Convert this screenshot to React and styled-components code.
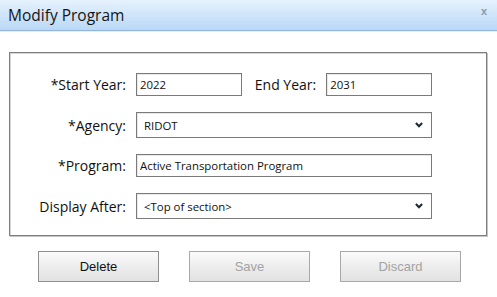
import React from 'react'
import styled, { createGlobalStyle } from 'styled-components'

const Global = createGlobalStyle`
  html, body { margin: 0; padding: 0; background: #fff; }
  body { font-family: "Open Sans", "Noto Sans", sans-serif; color: #111; }
`

const Dialog = styled.div`
  width: 497px;
  height: 297px;
  display: flex;
  flex-direction: column;
  background: #fff;
`

const TitleBar = styled.div`
  height: 31px;
  box-sizing: border-box;
  display: flex;
  align-items: center;
  justify-content: space-between;
  padding: 0 10px 1px 8px;
  background: linear-gradient(to bottom, #e6f2fd 0%, #cfe5fa 50%, #b9d8f6 100%);
  border-bottom: 1px solid #92b6dc;
  box-shadow: 0 1px 0 #e4eef8;
`

const Title = styled.span`
  font-size: 15.5px;
  color: #151515;
`

const Close = styled.span`
  font-family: "Liberation Sans", Arial, sans-serif;
  font-weight: bold;
  font-size: 11px;
  color: #8a9aab;
  align-self: flex-start;
  margin-top: 5px;
`

const Body = styled.div`
  padding: 21px 10px 0 9px;
`

const Panel = styled.div`
  height: 184px;
  box-sizing: border-box;
  border: 1px solid #7e7e7e;
  box-shadow: 1px 1px 0 #c4c4c4, inset 1px 1px 0 #d6d6d6;
  padding: 20px 0 0 0;
  display: grid;
  grid-template-columns: 116px 296px;
  column-gap: 10px;
  row-gap: 16px;
  align-content: start;
`

const Label = styled.label`
  font-size: 14px;
  text-align: right;
  align-self: center;
  color: #111;
  white-space: nowrap;
`

const YearRow = styled.div`
  display: flex;
  align-items: center;
`

const InlineLabel = styled(Label)`
  margin: 0 10px 0 13px;
`

const Field = styled.div`
  box-sizing: border-box;
  height: ${p => p.$tall ? '26px' : '23px'};
  width: ${p => p.$w || '296px'};
  border: 1px solid #7a7a7a;
  box-shadow: inset 1px 1px 0 #e8e8e8;
  display: flex;
  align-items: center;
  justify-content: space-between;
  padding: 0 8px 0 ${p => p.$pad || '3px'};
  font-size: 11.4px;
  color: #111;
  background: #fff;
`

const Chevron = () => (
  <svg width="8" height="6" viewBox="0 0 8 6">
    <path d="M0.9 1 L4 4.2 L7.1 1" fill="none" stroke="#1f2a33" strokeWidth="2.1" />
  </svg>
)

const ButtonRow = styled.div`
  display: flex;
  gap: 30px;
  padding: 15px 0 0 29px;
`

const Button = styled.div`
  width: 121px;
  height: 31px;
  box-sizing: border-box;
  border: 1px solid #8f8f8f;
  background: linear-gradient(to bottom, #fbfbfb 0%, #ededed 50%, #e2e2e2 100%);
  display: flex;
  align-items: center;
  justify-content: center;
  font-family: "Liberation Sans", Arial, sans-serif;
  font-size: 13px;
  color: ${p => p.disabled ? '#a3a3a3' : '#111'};
  border-color: ${p => p.disabled ? '#a8a8a8' : '#8f8f8f'};
`

export default function App() {
  return (
    <Dialog>
      <Global />
      <TitleBar>
        <Title>Modify Program</Title>
        <Close>x</Close>
      </TitleBar>
      <Body>
        <Panel>
          <Label>*Start Year:</Label>
          <YearRow>
            <Field $w="107px">2022</Field>
            <InlineLabel>End Year:</InlineLabel>
            <Field $w="107px">2031</Field>
          </YearRow>

          <Label>*Agency:</Label>
          <Field $tall $pad="7px">RIDOT<Chevron /></Field>

          <Label>*Program:</Label>
          <Field>Active Transportation Program</Field>

          <Label>Display After:</Label>
          <Field $tall $pad="7px">&lt;Top of section&gt;<Chevron /></Field>
        </Panel>
        <ButtonRow>
          <Button>Delete</Button>
          <Button disabled>Save</Button>
          <Button disabled>Discard</Button>
        </ButtonRow>
      </Body>
    </Dialog>
  )
}
